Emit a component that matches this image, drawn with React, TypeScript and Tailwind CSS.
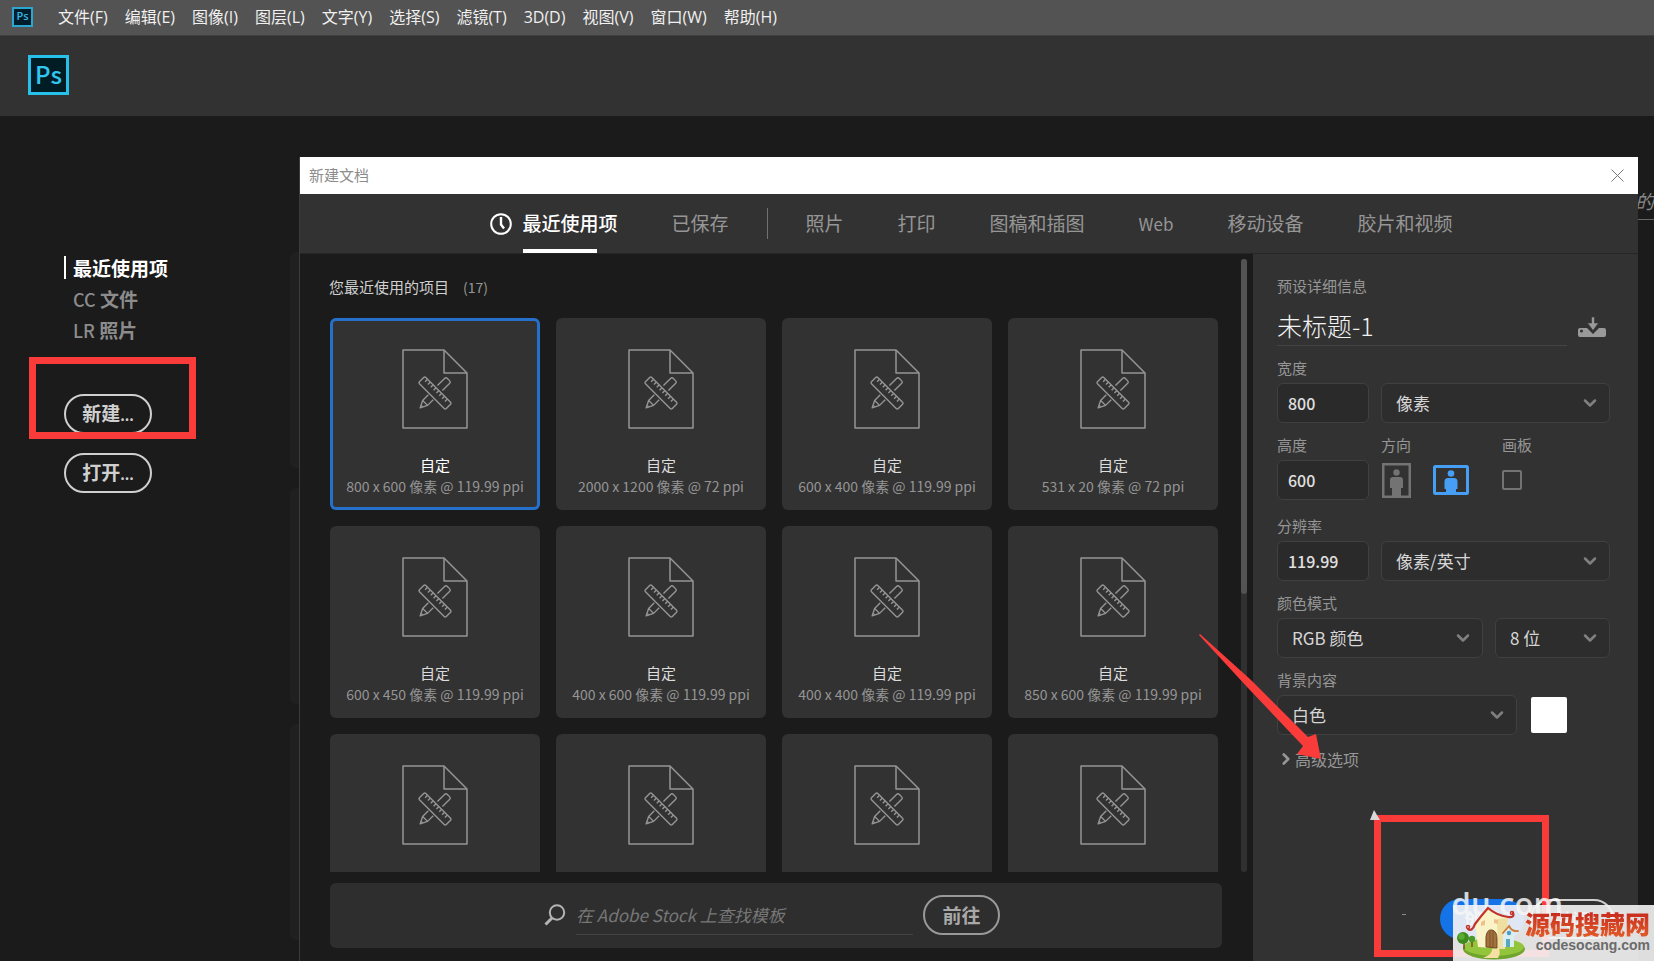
import React, { useState } from 'react';
import { ChevronDown, ChevronRight } from 'lucide-react';

const menus = [
  '文件(F)',
  '编辑(E)',
  '图像(I)',
  '图层(L)',
  '文字(Y)',
  '选择(S)',
  '滤镜(T)',
  '3D(D)',
  '视图(V)',
  '窗口(W)',
  '帮助(H)',
];

const categories = ['照片', '打印', '图稿和插图', 'Web', '移动设备', '胶片和视频'];

const presets = [
  '800 x 600 像素 @ 119.99 ppi',
  '2000 x 1200 像素 @ 72 ppi',
  '600 x 400 像素 @ 119.99 ppi',
  '531 x 20 像素 @ 72 ppi',
  '600 x 450 像素 @ 119.99 ppi',
  '400 x 600 像素 @ 119.99 ppi',
  '400 x 400 像素 @ 119.99 ppi',
  '850 x 600 像素 @ 119.99 ppi',
  '',
  '',
  '',
  '',
];

const DocIcon: React.FC = () => (
  <svg width="66" height="80" viewBox="0 0 66 80" fill="none" stroke="#959595" strokeWidth="1.5" strokeLinejoin="round">
    <path d="M1 1H42L65 24V79H1Z" />
    <path d="M42 1V24H65" />
    <g transform="translate(33 44) rotate(45)" strokeWidth="1.4">
      <path d="M-3.5 -7V-17Q-3.5 -19 -1.5 -19H1.5Q3.5 -19 3.5 -17V-7" />
      <path d="M-3.5 6V14L0 21L3.5 14V6" />
      <path d="M-3.5 14H3.5M-1 18.5H1" />
      <rect x="-19" y="-4.5" width="38" height="9" rx="1.5" />
      <path d="M-15 -4.5V-1M-11 -4.5V-1M-7 -4.5V-1M-3 -4.5V-1M1 -4.5V-1M5 -4.5V-1M9 -4.5V-1M13 -4.5V-1" />
    </g>
  </svg>
);

const ClockIcon: React.FC = () => (
  <svg width="22" height="22" viewBox="0 0 22 22" fill="none" stroke="#fff" strokeWidth="2">
    <circle cx="11" cy="11" r="9.8" />
    <path d="M11 4V11.5L14 15.5" strokeWidth="2.4" />
  </svg>
);

const SearchIcon: React.FC = () => (
  <svg width="22" height="22" viewBox="0 0 22 22" fill="none" stroke="#b4b4b4">
    <circle cx="13" cy="8.5" r="7.2" strokeWidth="2" />
    <path d="M8 14L1.5 20.5" strokeWidth="3" />
  </svg>
);

const SaveIcon: React.FC = () => (
  <svg width="28" height="21" viewBox="0 0 28 21" fill="#999">
    <path d="M2 11H9L15 17L21 11H26Q28 11 28 13V18Q28 20 26 20H2Q0 20 0 18V13Q0 11 2 11Z" />
    <path d="M13.5 0H16.5V6H20.5L15 13.5L9.5 6H13.5Z" stroke="#323232" strokeWidth="0.6" />
    <circle cx="3.5" cy="14" r="1.5" fill="#323232" />
  </svg>
);

const PortraitIcon: React.FC = () => (
  <svg width="29" height="35" viewBox="0 0 29 35" fill="#737373">
    <rect x="1.25" y="1.25" width="26.5" height="32.5" fill="none" stroke="#737373" strokeWidth="2.5" />
    <circle cx="14.5" cy="9.5" r="3.2" />
    <path d="M11 14H18Q21 14 21 17V25H19V33H10V25H8V17Q8 14 11 14Z" />
  </svg>
);

const LandscapeIcon: React.FC = () => (
  <svg width="36" height="30" viewBox="0 0 36 30" fill="#469ff5">
    <rect x="1.5" y="1.5" width="33" height="27" rx="1" fill="none" stroke="#469ff5" strokeWidth="3" />
    <circle cx="18" cy="8.5" r="3.3" />
    <path d="M15 13H21Q24.5 13 24.5 16.5V24H23V28H13V24H11.5V16.5Q11.5 13 15 13Z" />
  </svg>
);

const House: React.FC = () => (
  <svg width="72" height="56" viewBox="0 0 72 56" fill="none">
    <ellipse cx="41" cy="44" rx="31" ry="10.5" fill="#6fa52c" />
    <ellipse cx="41" cy="42" rx="30" ry="9" fill="#93c53c" />
    <path d="M39 44Q40 49 30 53H45Q48 48 46 43Z" fill="#f6dfa4" />
    <path d="M22 17L34 4L55 13L52 44L25 42Z" fill="#faf3c8" />
    <path d="M44 14L55 13L52 44L45 44Z" fill="#efe0a2" />
    <path d="M15 24Q19 27 22 19Q28 11 35 3Q43 10 55 12Q62 13 60 8" stroke="#c2352c" strokeWidth="2.2" strokeLinecap="round" />
    <circle cx="15" cy="22" r="1.5" stroke="#c2352c" strokeWidth="1.5" />
    <circle cx="59" cy="8" r="1.5" stroke="#c2352c" strokeWidth="1.5" />
    <path d="M33 42V32Q34 24 39 25Q44 26 44 34V43Z" fill="#a2713e" stroke="#70481f" strokeWidth="1" />
    <path d="M37 26V42M40 26V42" stroke="#70481f" strokeWidth="0.7" />
    <path d="M28 17L32 15V20L28 21ZM41 14L45 15V19L41 18Z" fill="#efc08b" />
    <path d="M50 28L55 23L61 28V42H50Z" fill="#d8eef2" />
    <path d="M50 28L56 21Q59 27 65 26" stroke="#cd7b38" strokeWidth="1.8" strokeLinecap="round" />
    <circle cx="56" cy="28" r="2.2" fill="#4c9cc4" />
    <path d="M53 34H57V42H53Z" fill="#5aa7b9" />
    <path d="M11 36V44M19 36V42" stroke="#7c5426" strokeWidth="1.6" />
    <circle cx="10" cy="33" r="6" fill="#3f8a1f" />
    <circle cx="8.5" cy="31.5" r="3.2" fill="#5dab33" />
    <circle cx="19" cy="34" r="3.2" fill="#4b9a28" />
  </svg>
);

const Label: React.FC<{ htmlFor: string; children: React.ReactNode }> = ({ htmlFor, children }) => (
  <label htmlFor={htmlFor} className="block h-5 text-[15px] leading-5 text-[#969696]">
    {children}
  </label>
);

const TextBox: React.FC<{ id: string; value: string }> = ({ id, value }) => (
  <input
    id={id}
    defaultValue={value}
    className="h-10 w-[92px] rounded-md border border-[#404040] bg-[#2a2a2a] px-2.5 text-base font-medium text-[#e0e0e0]"
  />
);

const Dropdown: React.FC<{ id: string; options: string[]; className: string }> = ({ id, options, className }) => (
  <div className={`relative ${className}`}>
    <select
      id={id}
      aria-label={options[0]}
      className="h-10 w-full appearance-none rounded-md border border-[#404040] bg-[#2d2d2d] px-3.5 text-[17px] leading-6 text-[#d6d6d6]"
    >
      {options.map((o) => (
        <option key={o}>{o}</option>
      ))}
    </select>
    <ChevronDown className="pointer-events-none absolute top-2.5 right-2.5 size-5 text-[#808080]" strokeWidth={3} />
  </div>
);

const PresetGrid: React.FC = () => {
  const [selected, setSelected] = useState(0);

  return (
    <div className="grid min-h-0 flex-1 grid-cols-4 content-start gap-4 overflow-hidden pr-[23px] pl-[30px]">
      {presets.map((size, i) => (
        <button
          key={i}
          onClick={() => setSelected(i)}
          className={`flex h-48 flex-col items-center rounded-md bg-[#323232] pt-[31px] whitespace-nowrap ${
            i === selected ? 'ring-3 ring-[#2570cb] ring-inset' : ''
          }`}
        >
          <DocIcon />
          {size && (
            <>
              <span className={`mt-6.5 text-[15px] leading-5 ${i === selected ? 'text-white' : 'text-[#dcdcdc]'}`}>自定</span>
              <span className="mt-px text-sm leading-5 text-[#959595]">{size}</span>
            </>
          )}
        </button>
      ))}
    </div>
  );
};

const PresetDetails: React.FC = () => (
  <form className="flex w-[385px] shrink-0 flex-col bg-[#323232] pt-5.5 pr-7 pl-6">
    <Label htmlFor="docname">预设详细信息</Label>
    <div className="mt-3 flex items-center justify-between">
      <input
        id="docname"
        defaultValue="未标题-1"
        className="h-[38px] w-[290px] border-b border-[#444] bg-transparent pb-1 text-[25px] leading-8 font-light text-[#f2f2f2]"
      />
      <button type="button" aria-label="保存预设" className="pr-1">
        <SaveIcon />
      </button>
    </div>

    <div className="mt-3">
      <Label htmlFor="width">宽度</Label>
      <div className="mt-[5px] flex gap-3">
        <TextBox id="width" value="800" />
        <Dropdown id="unit" options={['像素', '英寸', '厘米']} className="flex-1" />
      </div>
    </div>

    <div className="mt-3 flex gap-3">
      <div>
        <Label htmlFor="height">高度</Label>
        <div className="mt-[5px]">
          <TextBox id="height" value="600" />
        </div>
      </div>
      <div className="w-[109px]">
        <span className="block h-5 text-[15px] leading-5 text-[#969696]">方向</span>
        <div className="mt-[5px] flex h-10 items-center gap-[22px] pl-px">
          <button type="button" aria-label="纵向">
            <PortraitIcon />
          </button>
          <button type="button" aria-label="横向">
            <LandscapeIcon />
          </button>
        </div>
      </div>
      <div>
        <Label htmlFor="artboard">画板</Label>
        <div className="mt-[5px] flex h-10 items-center">
          <input id="artboard" type="checkbox" className="size-5 appearance-none rounded-xs border-2 border-[#737373]" />
        </div>
      </div>
    </div>

    <div className="mt-4">
      <Label htmlFor="resolution">分辨率</Label>
      <div className="mt-[5px] flex gap-3">
        <TextBox id="resolution" value="119.99" />
        <Dropdown id="resunit" options={['像素/英寸', '像素/厘米']} className="flex-1" />
      </div>
    </div>

    <div className="mt-3">
      <Label htmlFor="mode">颜色模式</Label>
      <div className="mt-[5px] flex gap-3">
        <Dropdown id="mode" options={['RGB 颜色', 'CMYK 颜色', '灰度']} className="flex-1" />
        <Dropdown id="depth" options={['8 位', '16 位', '32 位']} className="w-[115px]" />
      </div>
    </div>

    <div className="mt-3">
      <Label htmlFor="background">背景内容</Label>
      <div className="mt-[5px] flex items-center gap-3.5">
        <Dropdown id="background" options={['白色', '黑色', '透明']} className="w-60" />
        <button type="button" aria-label="背景颜色" className="size-9 rounded-xs bg-white" />
      </div>
    </div>

    <button type="button" className="mt-3.5 flex items-center self-start text-base leading-5 text-[#969696]">
      <ChevronRight className="size-[18px]" strokeWidth={3.5} />
      高级选项
    </button>

    <div className="mt-auto -mr-1 mb-5.5 flex justify-end gap-1.5 text-lg font-bold">
      <button type="button" className="h-10 w-[84px] rounded-full bg-[#1473e6] text-white">
        创建
      </button>
      <button type="button" className="h-10 w-[84px] rounded-full border-2 border-[#d0d0d0] text-[#d0d0d0]">
        关闭
      </button>
    </div>
  </form>
);

const NewDocumentDialog: React.FC = () => (
  <div
    role="dialog"
    aria-label="新建文档"
    className="absolute top-[157px] right-4 bottom-0 left-[299px] flex flex-col border-l border-[#3c3c3c] bg-[#1b1b1b]"
  >
    <div className="flex h-[37px] shrink-0 items-center justify-between bg-white pr-3.5 pl-[9px]">
      <span className="text-[15px] text-[#8c8c8c]">新建文档</span>
      <button aria-label="关闭窗口">
        <svg width="13" height="13" viewBox="0 0 13 13" stroke="#777" strokeWidth="1">
          <path d="M0.5 0.5L12.5 12.5M12.5 0.5L0.5 12.5" />
        </svg>
      </button>
    </div>

    <div className="flex h-[59px] shrink-0 justify-center gap-[54px] bg-[#323232] pl-1 text-[19px] text-[#969696]">
      <button className="flex items-center gap-[11px] font-medium text-white">
        <ClockIcon />
        <span className="relative flex h-full items-center">
          最近使用项
          <span className="absolute bottom-0 left-0 h-1 w-[74px] bg-white" />
        </span>
      </button>
      <div className="flex items-center gap-[38px]">
        <button>已保存</button>
        <span className="h-[31px] w-px bg-[#707070]" />
        <button>{categories[0]}</button>
      </div>
      {categories.slice(1).map((c) => (
        <button key={c} className={c === 'Web' ? 'text-[17px]' : ''}>
          {c}
        </button>
      ))}
    </div>

    <div className="flex min-h-0 flex-1 border-t border-[#262626]">
      <div className="flex min-w-0 flex-1 flex-col">
        <div className="flex min-h-0 flex-1">
          <div className="flex min-w-0 flex-1 flex-col pt-[23px]">
            <h2 className="mb-[21px] flex h-5 shrink-0 items-center gap-3.5 pl-[29px] text-[15px] text-[#d0d0d0]">
              您最近使用的项目 <span className="text-sm text-[#969696]">(17)</span>
            </h2>
            <PresetGrid />
          </div>
          <div className="mt-[5px] mr-1.5 w-1.5 rounded-sm bg-[#303030]">
            <div className="h-[335px] w-1.5 rounded-sm bg-[#535353]" />
          </div>
        </div>
        <div className="mt-[11px] mr-[31px] mb-[13px] ml-[30px] flex h-[65px] shrink-0 items-center justify-center gap-2.5 rounded-md bg-[#2e2e2e] pr-2 pb-0.5">
          <SearchIcon />
          <input
            aria-label="查找模板"
            placeholder="在 Adobe Stock 上查找模板"
            className="h-10 w-[337px] border-b border-[#444] bg-transparent text-[17px] italic placeholder:text-[#777]"
          />
          <button className="h-10 w-[77px] rounded-full border-2 border-[#999] text-[19px] leading-6 font-bold text-[#a8a8a8]">
            前往
          </button>
        </div>
      </div>
      <PresetDetails />
    </div>
  </div>
);

// red call-outs and site badges drawn above the window
const Annotations: React.FC = () => (
  <div className="pointer-events-none absolute inset-0 overflow-hidden">
    <div className="absolute top-[357px] left-[29px] h-[82px] w-[167px] border-7 border-[#f93b3a]" />
    <svg className="absolute top-[634px] right-[333px]" width="122" height="126" viewBox="0 0 122 126" fill="#f93b3a">
      <path d="M0 1L1 0L52 46L109 103L117 100L122 125L98 120L104 112L49 54Z" />
    </svg>
    <div className="absolute right-[105px] bottom-1 h-[142px] w-[175px] border-7 border-[#f93b3a]" />
    <svg className="absolute right-[274px] bottom-[141px]" width="10" height="10" viewBox="0 0 10 10" fill="#d8d8d8">
      <path d="M4 0L10 10H0Z" />
    </svg>
    <div className="absolute right-[248px] bottom-[46px] h-px w-1 bg-[#8a8a8a]" />
    <span className="absolute right-[91px] bottom-[42px] font-['Open_Sans','Noto_Sans',sans-serif] text-[31px] leading-8 font-semibold text-white/80">
      du.com
    </span>
    <div className="absolute right-0 bottom-0 flex h-14 w-[201px] justify-between bg-[#f4f4f4]/90">
      <House />
      <div className="mr-1 flex flex-col items-end pt-1 whitespace-nowrap">
        <span className="bg-linear-to-b from-[#c4201c] to-[#e25a28] bg-clip-text text-[25px] leading-7 font-black text-transparent">
          源码搜藏网
        </span>
        <span className="font-['Liberation_Sans',Arial,sans-serif] text-sm leading-4 font-bold text-[#6b6b6b]">
          codesocang.com
        </span>
      </div>
    </div>
  </div>
);

const App: React.FC = () => {
  return (
    <div className="relative flex min-h-screen flex-col overflow-hidden bg-[#1b1b1b] font-['Noto_Sans_CJK_SC',sans-serif]">
      <nav className="flex h-[35px] items-center gap-[17px] bg-[#535353] pb-0.5 pl-3 font-['Open_Sans','Noto_Sans_CJK_SC',sans-serif] text-base text-[#f0f0f0]">
        <span className="mr-2 flex h-5 w-[21px] items-center justify-center border-2 border-[#2ba6d0] bg-[#001d2b] text-[11px] font-semibold text-[#35b6e3]">
          Ps
        </span>
        {menus.map((m) => (
          <button key={m}>{m}</button>
        ))}
      </nav>

      <header className="flex h-[81px] items-center border-t border-[#3f3f3f] bg-[#323232] pb-0.5 pl-7">
        <span className="flex h-10 w-[41px] items-center justify-center border-3 border-[#26c0e8] bg-[#001d26] pb-0.5 text-2xl leading-6 font-medium text-[#31c5f0]">
          Ps
        </span>
      </header>

      <div className="flex flex-1">
        <aside className="flex-1 pt-[136px] pl-16">
          <ul className="text-[19px] leading-[31px] font-bold text-[#8c8c8c]">
            <li className="flex items-center gap-[7px] text-white">
              <span className="h-[23px] w-0.5 bg-white" />
              最近使用项
            </li>
            <li className="pl-[9px]">
              <span className="text-lg font-medium">CC</span> 文件
            </li>
            <li className="pl-[9px]">
              <span className="text-lg font-medium">LR</span> 照片
            </li>
          </ul>
          <div className="mt-[49px] flex flex-col items-start gap-[19px]">
            <button className="h-10 w-[88px] rounded-full border-2 border-[#cfcfcf] pb-0.5 text-[19px] leading-6 font-bold text-[#cfcfcf]">
              新建<span className="text-sm">...</span>
            </button>
            <button className="h-10 w-[88px] rounded-full border-2 border-[#cfcfcf] pb-0.5 text-[19px] leading-6 font-bold text-[#cfcfcf]">
              打开<span className="text-sm">...</span>
            </button>
          </div>
        </aside>
        <div className="w-4 overflow-hidden pt-[69px]">
          <div className="flex h-[35px] w-4 justify-end border-b border-[#666] text-[19px] leading-8 whitespace-nowrap text-[#888] italic">
            的
          </div>
        </div>
      </div>

      <div className="absolute top-[252px] left-[290px] flex flex-col gap-5">
        <div className="h-[216px] w-4 rounded-md bg-[#202020]" />
        <div className="h-[216px] w-4 rounded-md bg-[#202020]" />
        <div className="h-[216px] w-4 rounded-md bg-[#202020]" />
      </div>

      <NewDocumentDialog />
      <Annotations />
    </div>
  );
};

export default App;
